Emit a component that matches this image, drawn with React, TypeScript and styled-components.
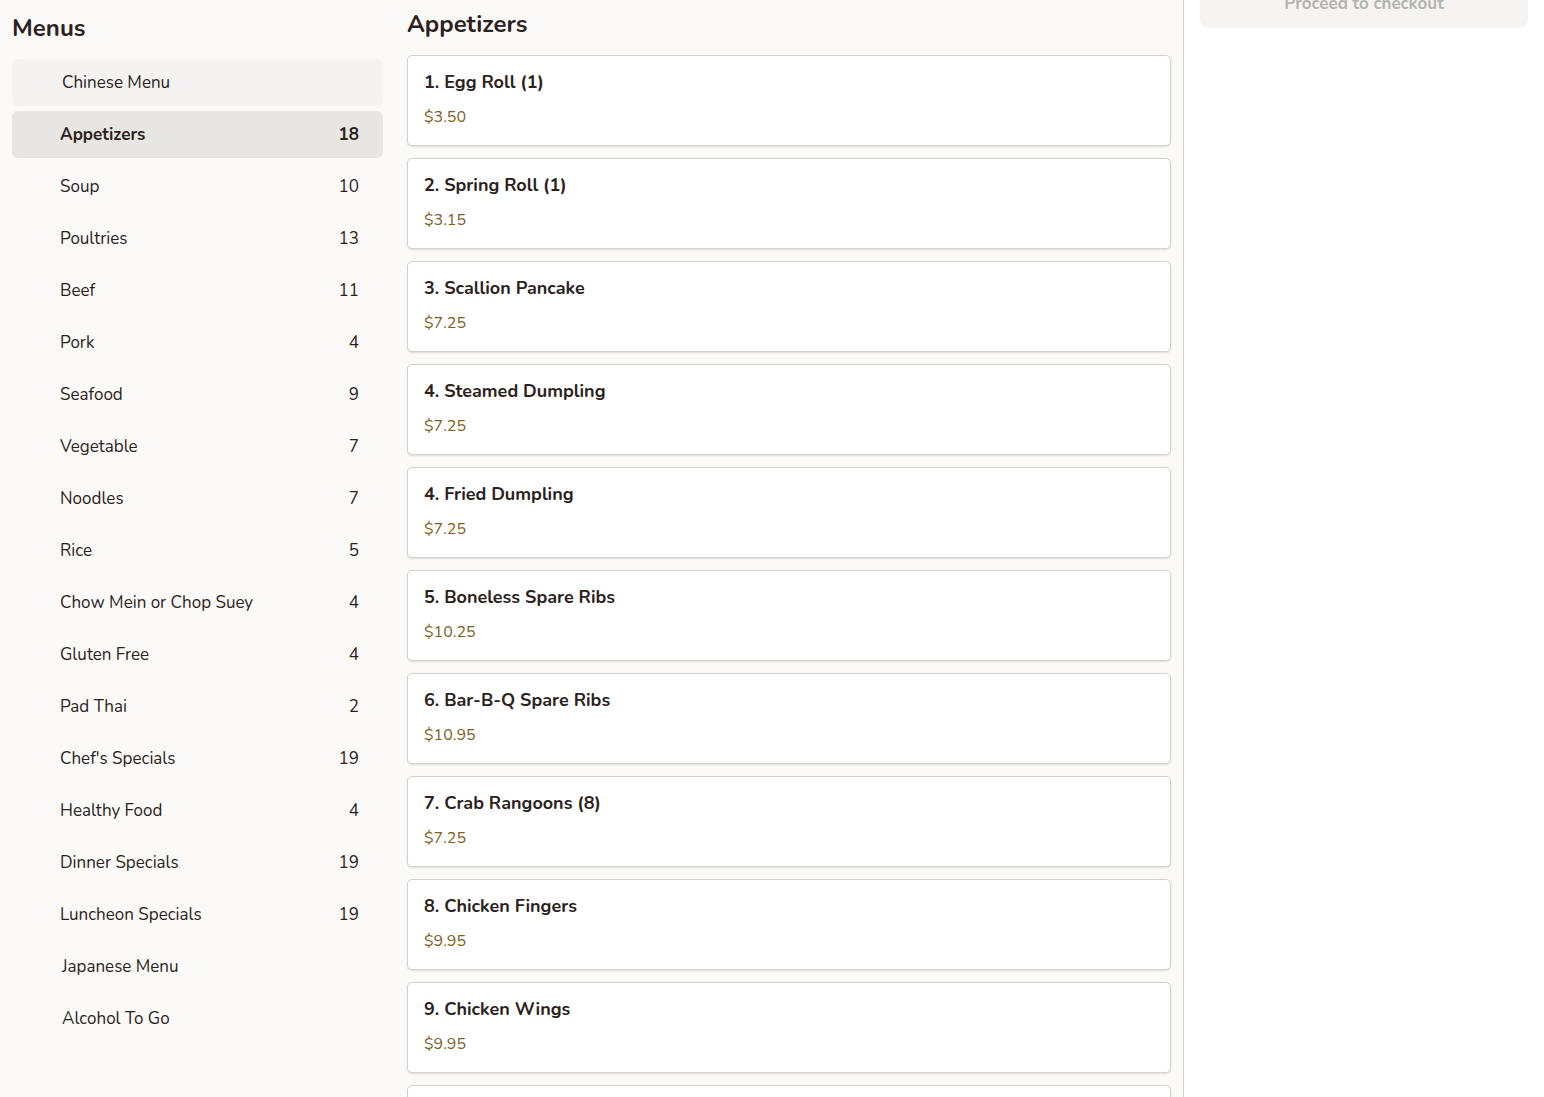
import React from 'react';
import styled, { createGlobalStyle } from 'styled-components';

interface Category {
  name: string;
  count?: number;
  top?: boolean;
  active?: boolean;
}

interface Item {
  name: string;
  price: string;
}

const categories: Category[] = [
  { name: 'Chinese Menu', top: true },
  { name: 'Appetizers', count: 18, active: true },
  { name: 'Soup', count: 10 },
  { name: 'Poultries', count: 13 },
  { name: 'Beef', count: 11 },
  { name: 'Pork', count: 4 },
  { name: 'Seafood', count: 9 },
  { name: 'Vegetable', count: 7 },
  { name: 'Noodles', count: 7 },
  { name: 'Rice', count: 5 },
  { name: 'Chow Mein or Chop Suey', count: 4 },
  { name: 'Gluten Free', count: 4 },
  { name: 'Pad Thai', count: 2 },
  { name: "Chef's Specials", count: 19 },
  { name: 'Healthy Food', count: 4 },
  { name: 'Dinner Specials', count: 19 },
  { name: 'Luncheon Specials', count: 19 },
  { name: 'Japanese Menu', top: true },
  { name: 'Alcohol To Go', top: true },
];

const items: Item[] = [
  { name: '1. Egg Roll (1)', price: '$3.50' },
  { name: '2. Spring Roll (1)', price: '$3.15' },
  { name: '3. Scallion Pancake', price: '$7.25' },
  { name: '4. Steamed Dumpling', price: '$7.25' },
  { name: '4. Fried Dumpling', price: '$7.25' },
  { name: '5. Boneless Spare Ribs', price: '$10.25' },
  { name: '6. Bar-B-Q Spare Ribs', price: '$10.95' },
  { name: '7. Crab Rangoons (8)', price: '$7.25' },
  { name: '8. Chicken Fingers', price: '$9.95' },
  { name: '9. Chicken Wings', price: '$9.95' },
  { name: '10. Pu Pu Platter', price: '$15.95' },
];

const GlobalStyle = createGlobalStyle`
  html, body {
    margin: 0;
    padding: 0;
    overflow: hidden;
  }
  body {
    font-family: 'Nunito', 'Lato', 'Open Sans', sans-serif;
    color: #2b2220;
    background: #fbfaf9;
  }
`;

const Page = styled.div`
  display: grid;
  grid-template-columns: 395px 789px 1fr;
  height: 100vh;
  overflow: hidden;
`;

const Sidebar = styled.aside`
  padding: 12px 12px 0;
`;

const SidebarTitle = styled.h2`
  margin: 0 0 15px;
  font-size: 24px;
  font-weight: 700;
  line-height: 32px;
`;

const CategoryList = styled.ul`
  list-style: none;
  margin: 0;
  padding: 0;
  display: flex;
  flex-direction: column;
  gap: 5px;
`;

const CategoryRow = styled.li<{ $top?: boolean; $active?: boolean }>`
  display: flex;
  align-items: center;
  justify-content: space-between;
  height: 47px;
  padding: 0 24px 0 ${({ $top }) => ($top ? '50px' : '48px')};
  border-radius: 6px;
  font-size: 17px;
  font-weight: ${({ $active }) => ($active ? 700 : 400)};
  background: ${({ $active }) => ($active ? '#e8e6e3' : 'transparent')};

  &:first-child {
    background: #f4f3f1;
  }
`;

const Count = styled.span`
  font-size: 17px;
`;

const Main = styled.main`
  padding: 6px 12px 0;
  border-right: 1px solid #d3d1ce;
`;

const SectionTitle = styled.h1`
  margin: 0 0 13px;
  font-size: 24px;
  font-weight: 700;
  line-height: 36px;
`;

const ItemList = styled.div`
  display: flex;
  flex-direction: column;
  gap: 12px;
`;

const Card = styled.div`
  background: #fff;
  border: 1px solid #d4d2cf;
  border-radius: 5px;
  box-shadow: 0 1px 2px rgba(0, 0, 0, 0.12);
  padding: 14px 16px 16px;
  display: flex;
  flex-direction: column;
  gap: 11px;
`;

const ItemName = styled.div`
  font-size: 18px;
  font-weight: 700;
  line-height: 24px;
`;

const Price = styled.div`
  font-size: 16px;
  line-height: 24px;
  color: #7d5f1f;
`;

const Cart = styled.section`
  background: #fff;
  padding: 0 16px;
`;

const CheckoutButton = styled.button`
  width: 100%;
  height: 48px;
  margin-top: -20px;
  border: none;
  border-radius: 8px;
  background: #f5f4f2;
  color: #b6b3af;
  font-family: inherit;
  font-size: 17px;
  font-weight: 700;
  cursor: not-allowed;
  transform: translateY(-7px);
`;

const App: React.FC = () => (
  <>
    <GlobalStyle />
    <Page>
      <Sidebar>
        <SidebarTitle>Menus</SidebarTitle>
        <CategoryList>
          {categories.map(c => (
            <CategoryRow key={c.name} $top={c.top} $active={c.active}>
              <span>{c.name}</span>
              {c.count !== undefined && <Count>{c.count}</Count>}
            </CategoryRow>
          ))}
        </CategoryList>
      </Sidebar>
      <Main>
        <SectionTitle>Appetizers</SectionTitle>
        <ItemList>
          {items.map(item => (
            <Card key={item.name}>
              <ItemName>{item.name}</ItemName>
              <Price>{item.price}</Price>
            </Card>
          ))}
        </ItemList>
      </Main>
      <Cart>
        <CheckoutButton disabled>Proceed to checkout</CheckoutButton>
      </Cart>
    </Page>
  </>
);

export default App;
